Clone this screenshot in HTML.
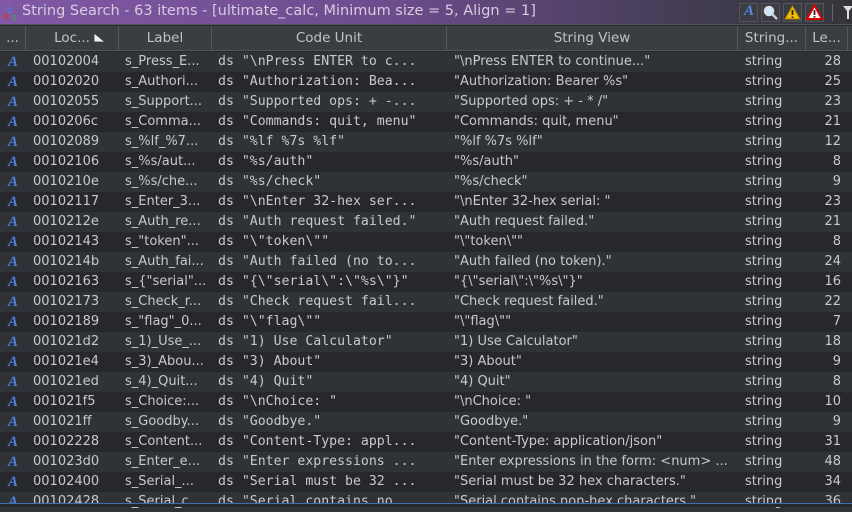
<!DOCTYPE html>
<html><head><meta charset="utf-8"><style>
*{margin:0;padding:0;box-sizing:border-box}
body{width:852px;height:507px;overflow:hidden;background:#26282b;font-family:"DejaVu Sans","Liberation Sans",sans-serif;font-size:13px;color:#c9c9c9;position:relative}
#title{position:absolute;left:0;top:0;width:852px;height:25px;background:linear-gradient(90deg,#8058a4 0%,#6e4c8e 45%,#443d55 80%,#33353a 100%);border-bottom:1px solid #555}
#title .t{position:absolute;left:22px;top:3px;color:#d8cce0;font-size:14.5px}
.ib{position:absolute;top:3px;width:19px;height:19px;border:1px solid #555;background:#3a3d44}
#hdr{position:absolute;top:26px;left:0;width:852px;height:25px;background:#3a3e43;border-bottom:1px solid #555}
.h{position:absolute;top:0;height:25px;line-height:25px;text-align:center;border-right:1px solid #55595e;color:#c2c2c2;font-size:13.5px}
.r{position:absolute;left:0;width:852px;height:20px;line-height:20px;white-space:nowrap}
.r span{position:absolute;top:0}
.m{font-family:"DejaVu Sans Mono","Liberation Mono",monospace;font-size:13.2px}
.A{color:#4f7fd8;font-style:italic;font-weight:bold;font-family:"Liberation Serif",serif;font-size:15px}
</style></head><body>
<div id="title">
<svg style="position:absolute;left:3px;top:4px" width="18" height="17"><text x="4" y="9" font-size="10" fill="#4a7fe0" font-family="Liberation Sans">b</text><text x="0" y="15" font-size="10" fill="#e03030" font-family="Liberation Sans">a</text><text x="9" y="16" font-size="9" fill="#40c040" font-family="Liberation Sans">c</text></svg>
<div class="t">String Search - 63 items - [ultimate_calc, Minimum size = 5, Align = 1]</div>
<div class="ib" style="left:739px"><span class="A" style="position:absolute;left:4px;top:-1px;color:#5a8ae0">A</span></div>
<div class="ib" style="left:761px"><svg width="17" height="17"><circle cx="7" cy="7" r="4.5" fill="#cfe6ff" stroke="#ddd" stroke-width="1.5"/><path d="M10 10l5 5" stroke="#ccc" stroke-width="2.5"/></svg></div>
<div class="ib" style="left:783px"><svg width="17" height="17"><path d="M8.5 2L16 15H1z" fill="#f5c000" stroke="#b08000"/><path d="M8.5 6v5M8.5 12.5v1.5" stroke="#222" stroke-width="1.8"/></svg></div>
<div class="ib" style="left:805px"><svg width="17" height="17"><path d="M8.5 1.5L16 15H1z" fill="#fff" stroke="#d00" stroke-width="2"/><path d="M8.5 6v5M8.5 12v1.6" stroke="#222" stroke-width="1.8"/></svg></div>
<div style="position:absolute;left:832px;top:4px;width:1px;height:17px;background:#666"></div>
<svg style="position:absolute;left:842px;top:5px" width="12" height="16"><path d="M1 1h10l-4 5v8h-2v-8z" fill="#ddd"/></svg>
</div>
<div id="hdr">
<div class="h" style="left:0;width:26px">...</div>
<div class="h" style="left:26px;width:93px">Loc...<svg style="position:absolute;left:68px;top:7px" width="12" height="10"><path d="M0 0v9h11z" fill="#eee" stroke="#333" stroke-width=".8"/></svg></div>
<div class="h" style="left:119px;width:93px">Label</div>
<div class="h" style="left:212px;width:235px">Code Unit</div>
<div class="h" style="left:447px;width:291px">String View</div>
<div class="h" style="left:738px;width:68px">String...</div>
<div class="h" style="left:806px;width:42px">Le...</div>
</div>
<div id="rows"></div>
<div style="position:absolute;left:0;top:503px;width:852px;height:4px;background:#26282b;border-top:1px solid #3d6fb0"></div>
<script>
var d=[["00102004","s_Press_E...","\"\\nPress ENTER to c...","\"\\nPress ENTER to continue...\"",28],
["00102020","s_Authori...","\"Authorization: Bea...","\"Authorization: Bearer %s\"",25],
["00102055","s_Support...","\"Supported ops: + -...","\"Supported ops: + - * /\"",23],
["0010206c","s_Comma...","\"Commands: quit, menu\"","\"Commands: quit, menu\"",21],
["00102089","s_%lf_%7...","\"%lf %7s %lf\"","\"%lf %7s %lf\"",12],
["00102106","s_%s/aut...","\"%s/auth\"","\"%s/auth\"",8],
["0010210e","s_%s/che...","\"%s/check\"","\"%s/check\"",9],
["00102117","s_Enter_3...","\"\\nEnter 32-hex ser...","\"\\nEnter 32-hex serial: \"",23],
["0010212e","s_Auth_re...","\"Auth request failed.\"","\"Auth request failed.\"",21],
["00102143","s_\"token\"...","\"\\\"token\\\"\"","\"\\\"token\\\"\"",8],
["0010214b","s_Auth_fai...","\"Auth failed (no to...","\"Auth failed (no token).\"",24],
["00102163","s_{\"serial\"...","\"{\\\"serial\\\":\\\"%s\\\"}\"","\"{\\\"serial\\\":\\\"%s\\\"}\"",16],
["00102173","s_Check_r...","\"Check request fail...","\"Check request failed.\"",22],
["00102189","s_\"flag\"_0...","\"\\\"flag\\\"\"","\"\\\"flag\\\"\"",7],
["001021d2","s_1)_Use_...","\"1) Use Calculator\"","\"1) Use Calculator\"",18],
["001021e4","s_3)_Abou...","\"3) About\"","\"3) About\"",9],
["001021ed","s_4)_Quit...","\"4) Quit\"","\"4) Quit\"",8],
["001021f5","s_Choice:...","\"\\nChoice: \"","\"\\nChoice: \"",10],
["001021ff","s_Goodby...","\"Goodbye.\"","\"Goodbye.\"",9],
["00102228","s_Content...","\"Content-Type: appl...","\"Content-Type: application/json\"",31],
["001023d0","s_Enter_e...","\"Enter expressions ...","\"Enter expressions in the form: &lt;num&gt; ...",48],
["00102400","s_Serial_...","\"Serial must be 32 ...","\"Serial must be 32 hex characters.\"",34],
["00102428","s_Serial_c...","\"Serial contains no...","\"Serial contains non-hex characters.\"",36]];
function e(s){return s.replace(/&(?!lt|gt)/g,'&amp;').replace(/</g,'&lt;')}
var h='';d.forEach(function(r,i){var y=52+i*20;h+='<div class="r" style="top:'+y+'px;background:'+(i%2?'#26282b':'#2f3236')+'"><span class="A" style="left:8px">A</span><span style="left:33px">'+r[0]+'</span><span style="left:125px">'+e(r[1])+'</span><span class="m" style="left:218px">ds '+e(r[2])+'</span><span style="left:454px">'+r[3]+'</span><span style="left:745px">string</span><span style="right:11px">'+r[4]+'</span></div>'});
document.getElementById('rows').innerHTML=h;
</script>
</body></html>
